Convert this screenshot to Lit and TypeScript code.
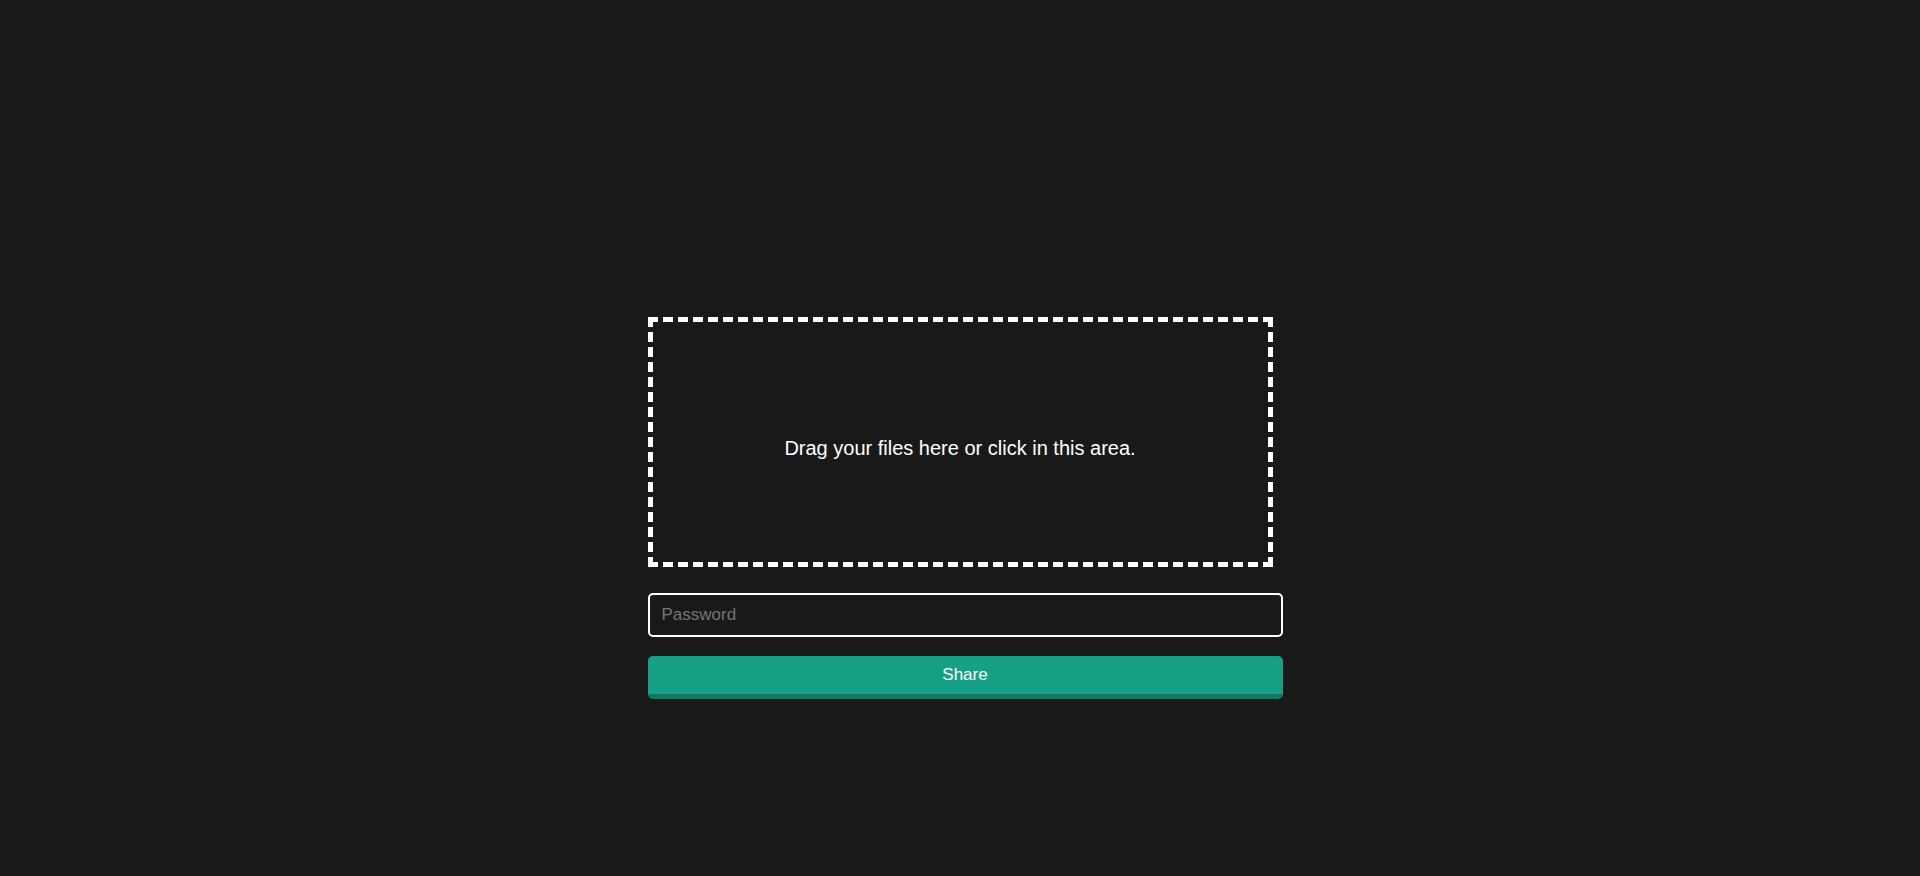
import { LitElement, html, css } from "lit";
import { customElement, state } from "lit/decorators.js";

@customElement("app-root")
export class AppRoot extends LitElement {
  static styles = css`
    :host {
      display: flex;
      flex-direction: column;
      align-items: center;
      justify-content: center;
      box-sizing: border-box;
      min-height: 100vh;
      padding: 140px 16px 0;
      background: #191919;
      color: #ffffff;
      font-family: "Liberation Sans", Arial, sans-serif;
    }

    .share-form {
      display: flex;
      flex-direction: column;
      width: 100%;
      max-width: 625px;
    }

    .drop-zone {
      display: flex;
      align-items: center;
      justify-content: center;
      box-sizing: border-box;
      min-height: 250px;
      padding-top: 12px;
      border: 5px dashed #ffffff;
      font-size: 20px;
      line-height: 24px;
      text-align: center;
      cursor: pointer;
    }

    .hidden {
      position: absolute;
      width: 1px;
      height: 1px;
      overflow: hidden;
      clip-path: inset(50%);
      opacity: 0;
    }

    .password,
    .submit {
      box-sizing: border-box;
      width: calc(100% + 10px);
      margin: 0;
      border-radius: 5px;
      font-family: inherit;
      font-size: 17px;
      line-height: 20px;
      color: #ffffff;
    }

    .password {
      height: 44px;
      margin-top: 26px;
      padding: 0 12px;
      border: 2px solid #ffffff;
      background: transparent;
      outline: none;
    }

    .password::placeholder {
      color: #757575;
      opacity: 1;
    }

    .submit {
      height: 43px;
      margin-top: 19px;
      padding: 0 12px;
      border: 0;
      border-bottom: 5px solid #117a60;
      background: #16a085;
      cursor: pointer;
    }
  `;

  @state() private prompt = "Drag your files here or click in this area.";

  private setFiles(files?: FileList | null) {
    if (files?.length) this.prompt = `${files.length} file(s) selected`;
  }

  private onDrop(e: DragEvent) {
    e.preventDefault();
    this.setFiles(e.dataTransfer?.files);
  }

  render() {
    return html`
      <form class="share-form" @submit=${(e: Event) => e.preventDefault()}>
        <label
          class="drop-zone"
          for="files"
          @dragover=${(e: DragEvent) => e.preventDefault()}
          @drop=${this.onDrop}
          >${this.prompt}</label
        >
        <input
          class="hidden"
          id="files"
          type="file"
          multiple
          @change=${(e: Event) => this.setFiles((e.target as HTMLInputElement).files)}
        />
        <input
          class="password"
          type="password"
          name="password"
          placeholder="Password"
          aria-label="Password"
        />
        <button class="submit" type="submit">Share</button>
      </form>
    `;
  }
}
